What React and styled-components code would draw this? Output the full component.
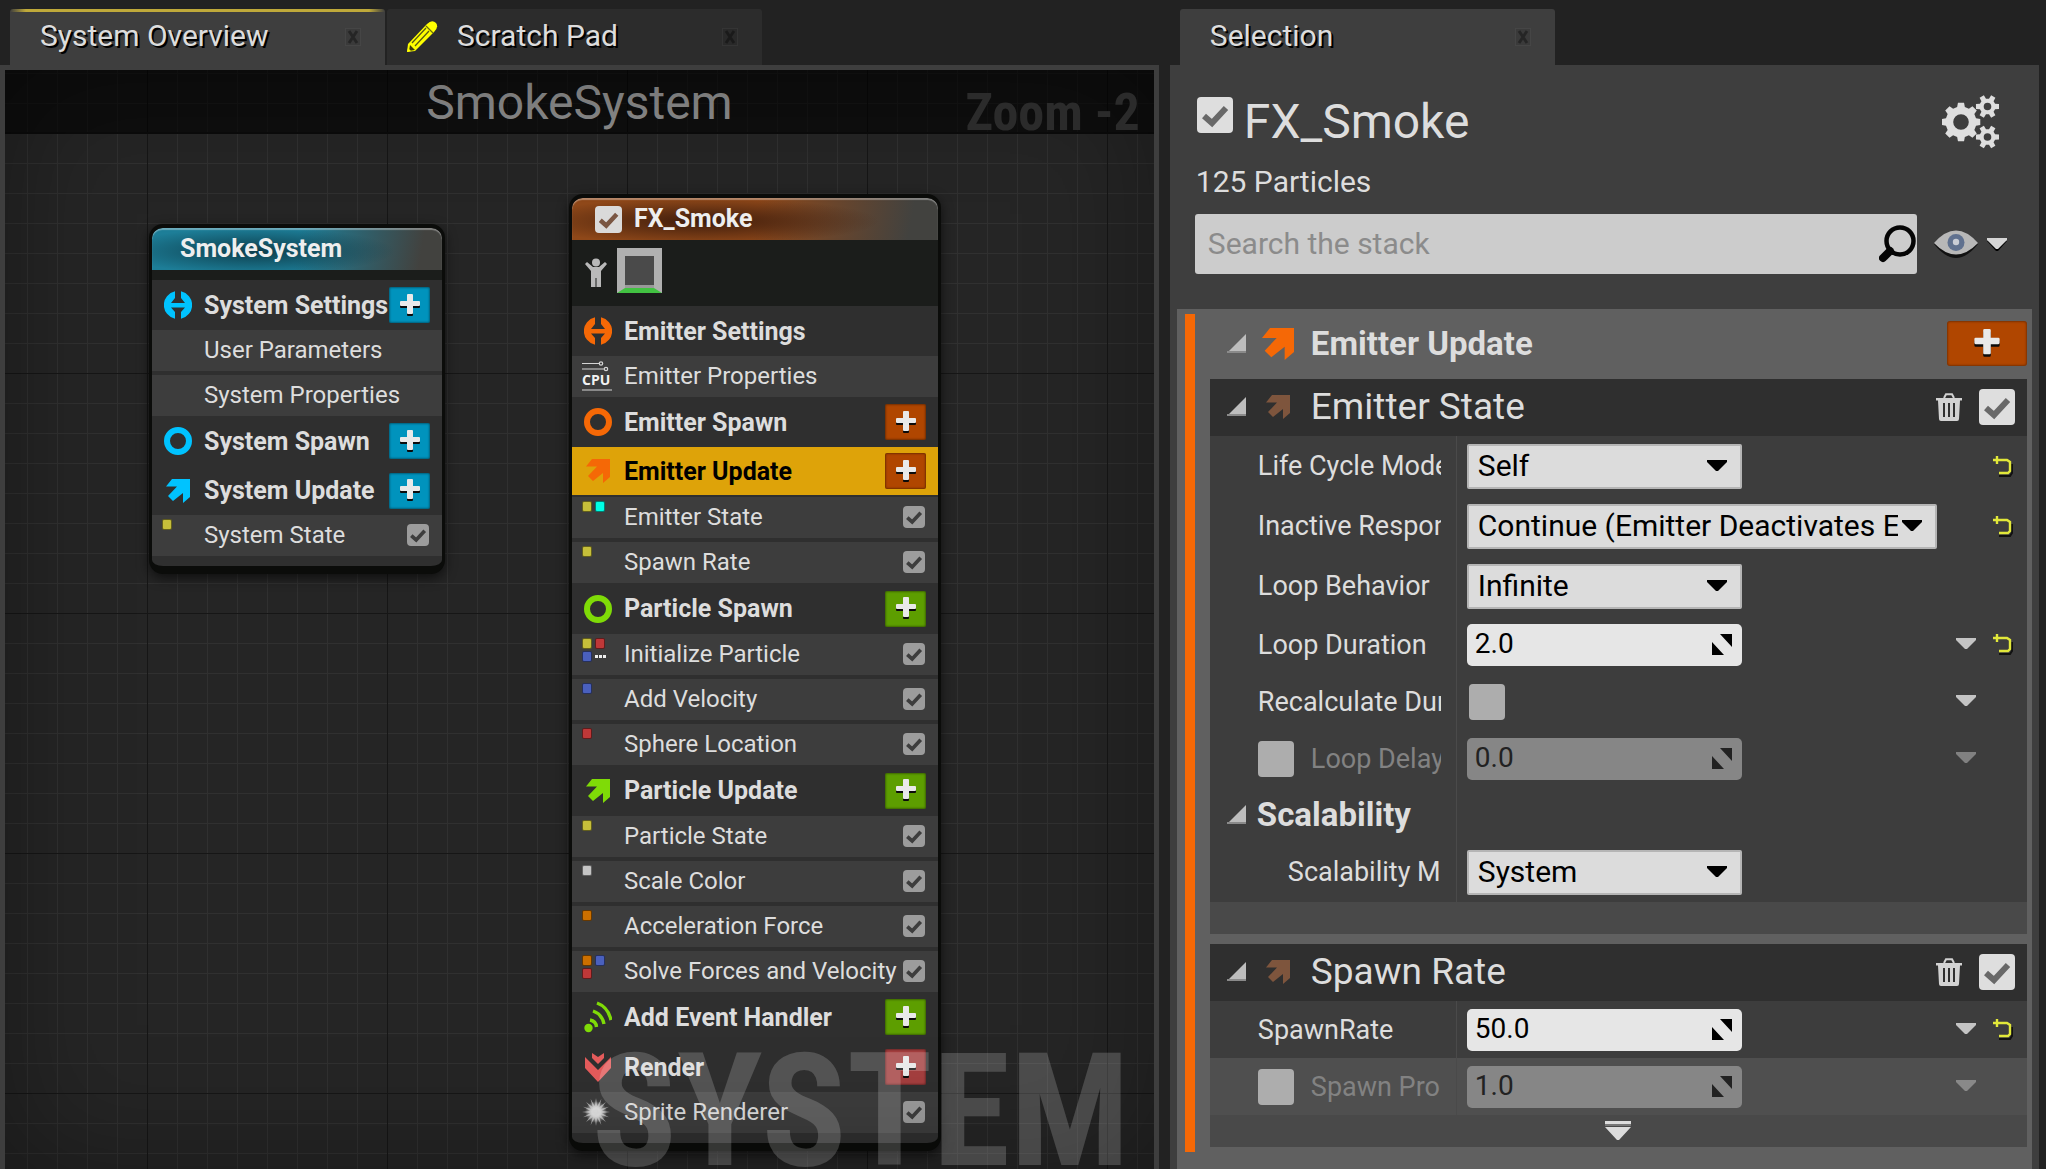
import React from "react";
import styled, { createGlobalStyle, css } from "styled-components";

const color = {
  chrome: "#222222",
  panel: "#3e3e3e",
  tabIdle: "#2c2c2c",
  group: "#606060",
  header: "#2f2f2f",
  row: "#3d3d3d",
  rowAlt: "#4f4f4f",
  footer: "#494949",
  text: "#dddddd",
  orange: "#f56806",
  orangeBtn: "#b04600",
  blue: "#00c3ff",
  blueBtn: "#0093bd",
  green: "#7fdb07",
  greenBtn: "#5d9e00",
  red: "#e65c5c",
  redBtn: "#a53f3f",
  select: "#dea309",
};

const GlobalStyle = createGlobalStyle`
  *, *::before, *::after { box-sizing: border-box; }
  html, body { margin: 0; background: ${color.chrome}; }
  body { font-family: Roboto, "Liberation Sans", sans-serif; color: ${color.text}; overflow: hidden; }
  button, input, select { font: inherit; color: inherit; margin: 0; border-radius: 0; }
  button { border: 0; padding: 0; background: none; display: grid; place-items: center; cursor: pointer; }
  h1, h2, h3, p, ul { margin: 0; padding: 0; font-weight: 400; }
  svg { display: block; flex: none; }
`;

/* ---------- window frame ---------- */

const Window = styled.div`
  height: 100vh;
  display: grid;
  grid-template-columns: 4fr 3fr;
  column-gap: 11px;
  padding: 9px 7px 0 0;
`;

const Pane = styled.section`
  min-width: 0;
  min-height: 0;
  display: flex;
  flex-direction: column;
`;

const TabStrip = styled.div`
  display: flex;
  gap: 2px;
  padding-left: 10px;
  height: 56px;
  flex: none;
`;

const TabBox = styled.div`
  width: 375px;
  display: flex;
  align-items: center;
  padding: 0 22px 0 ${(p) => (p.$icon ? 19 : 30)}px;
  border-radius: 3px 3px 0 0;
  background: ${(p) => (p.$active ? color.panel : color.tabIdle)};
  ${(p) =>
    p.$marked &&
    css`
      background: linear-gradient(90deg, transparent, #bfa93a 16px calc(100% - 16px), transparent) top / 100% 3px no-repeat,
        ${color.panel};
    `}
`;

const TabLabel = styled.button`
  flex: 1;
  display: flex;
  justify-content: flex-start;
  gap: 18px;
  font-size: 30px;
  line-height: 36px;
  white-space: nowrap;
  text-shadow: 2px 2px 0 #000;
  padding-bottom: 2px;
`;

const TabClose = styled.button`
  width: 20px;
  height: 20px;
`;

/* ---------- graph ---------- */

const GraphFrame = styled.div`
  flex: 1;
  min-height: 0;
  padding: 5px 5px 0;
  background: ${color.panel};
  display: flex;
`;

const Graph = styled.div`
  position: relative;
  flex: 1;
  overflow: hidden;
  background-color: #252525;
  background-image: linear-gradient(90deg, #161616 1px, transparent 1px), linear-gradient(#161616 1px, transparent 1px),
    linear-gradient(90deg, #303030 1px, transparent 1px), linear-gradient(#303030 1px, transparent 1px);
  background-size: 240px 240px, 240px 240px, 30px 30px, 30px 30px;
  background-position: 142px 0, 0 63px, 22px 0, 0 3px;
  &::after {
    content: "";
    position: absolute;
    inset: 0;
    pointer-events: none;
    box-shadow: inset 0 0 120px rgba(0, 0, 0, 0.35);
  }
`;

const GraphTitle = styled.h1`
  height: 64px;
  line-height: 66px;
  text-align: center;
  font-size: 48px;
  color: #8c8c8c;
  background: rgba(0, 0, 0, 0.6);
  border-bottom: 2px solid #0b0b0b;
`;

const Overlay = styled.span`
  position: absolute;
  z-index: 2;
  pointer-events: none;
  white-space: nowrap;
  font-family: "Roboto Condensed", "Liberation Sans Narrow", Roboto, sans-serif;
  font-weight: 700;
`;

const ZoomLevel = styled(Overlay)`
  top: 11px;
  right: 14px;
  font-size: 52px;
  line-height: 64px;
  color: #2b2b2b;
`;

const Watermark = styled(Overlay)`
  right: 24px;
  bottom: -36px;
  font-size: 158px;
  line-height: 188px;
  color: rgba(255, 255, 255, 0.18);
`;

const Node = styled.article`
  position: absolute;
  left: ${(p) => p.$x}px;
  top: ${(p) => p.$y}px;
  width: ${(p) => p.$w}px;
  border: solid #0b0c0a;
  border-width: 4px 3px 8px;
  border-radius: 14px;
  box-shadow: 0 4px 12px rgba(0, 0, 0, 0.6);
  background: ${color.header};
  overflow: hidden;
  padding-bottom: 10px;
`;

const NodeHeader = styled.header`
  height: 42px;
  display: flex;
  align-items: center;
  gap: 12px;
  padding: 0 0 0 ${(p) => (p.$inset)}px;
  border-radius: 10px 10px 0 0;
  box-shadow: inset 0 2px 1px rgba(255, 255, 255, 0.35);
  background: radial-gradient(ellipse 48% 55% at 36% 55%, ${(p) => p.$dark}, transparent),
    linear-gradient(100deg, ${(p) => p.$tint} 50%, #42423f 92%);
`;

const NodeTitle = styled.h2`
  font-size: 25px;
  line-height: 30px;
  font-weight: 700;
  color: #eee;
`;

const Usage = styled.div`
  height: ${(p) => p.$h}px;
  background: #1b1d1b;
  display: flex;
  align-items: flex-start;
  padding: 8px 13px 0;
  gap: 10px;
`;

const UsageIcon = styled.span`
  padding-top: 10px;
`;

const Thumb = styled.span`
  width: 45px;
  height: 45px;
  border: 8px solid #b0b0b0;
  border-width: 8px 8px 5px;
  border-bottom-color: #42c242;
  background: #4a4a4a;
  box-shadow: inset 0 -3px 0 #999;
`;

const StageRow = styled.div`
  height: ${(p) => p.$h}px;
  display: flex;
  align-items: center;
  padding: 0 12px;
  gap: 12px;
  font-size: 25px;
  font-weight: 700;
  white-space: nowrap;
  ${(p) =>
    p.$selected &&
    css`
      color: #000;
      background: ${color.select};
      border-bottom: 2px solid ${color.header};
    `}
`;

const RowIcon = styled.span`
  width: 28px;
  display: grid;
  place-items: center;
`;

const RowLabel = styled.span`
  flex: 1;
  min-width: 0;
`;

const StageAdd = styled.button`
  width: 41px;
  height: 36px;
  flex: none;
  border-radius: 2px;
  background: ${(p) => p.$fill};
  box-shadow: inset 0 0 2px 1px rgba(0, 0, 0, 0.35);
`;

const ItemList = styled.ul`
  list-style: none;
  display: grid;
  gap: 4px;
`;

const ItemRow = styled.li`
  height: 41px;
  display: flex;
  align-items: center;
  padding: 0 13px 2px 10px;
  background: ${color.row};
  font-size: 24px;
  white-space: nowrap;
`;

const ItemIcon = styled.span`
  width: 42px;
  height: 100%;
  display: grid;
  padding-top: ${(p) => (p.$top ? 4 : 0)}px;
  align-content: ${(p) => (p.$top ? "start" : "center")};
`;

const Swatches = styled.span`
  display: grid;
  grid-template-columns: 10px 10px;
  grid-auto-rows: 11px;
  gap: 2px 3px;
`;

const Swatch = styled.span`
  border-radius: 2px;
  background: ${(p) => p.$fill};
  border: 1px solid rgba(0, 0, 0, 0.5);
`;

const CpuText = styled.text`
  font: 700 14px "Open Sans", sans-serif;
`;

/* ---------- shared controls ---------- */

const TickWrap = styled.span`
  display: inline-grid;
  flex: none;
  width: ${(p) => p.$w}px;
  height: ${(p) => p.$w}px;
  place-items: center;
  color: ${(p) => p.$ink};
  > * { grid-area: 1 / 1; }
  > svg { pointer-events: none; visibility: hidden; }
  > input:checked + svg { visibility: visible; }
`;

const TickInput = styled.input`
  appearance: none;
  width: 100%;
  height: 100%;
  border-radius: 4px;
  background: ${(p) => p.$fill};
`;

const tickKinds = {
  node: { w: 22, fill: "#9c9c9c", ink: "#3d3d3d" },
  title: { w: 27, fill: "#dadada", ink: "#7a5643" },
  panel: { w: 36, fill: "#dedede", ink: "#686868" },
  empty: { w: 36, fill: "#adadad", ink: "#686868" },
};

function Tick({ kind, label, checked = true, id }) {
  const k = tickKinds[kind];
  return (
    <TickWrap $w={k.w} $ink={k.ink}>
      <TickInput id={id} type="checkbox" aria-label={label} defaultChecked={checked} $fill={k.fill} />
      <svg width={k.w} height={k.w} viewBox="0 0 36 36">
        <path d="M7 19 L15 26 L29 11" fill="none" stroke="currentColor" strokeWidth="6" />
      </svg>
    </TickWrap>
  );
}

/* ---------- details pane ---------- */

const Details = styled.div`
  flex: 1;
  min-height: 0;
  overflow: hidden;
  background: ${color.panel};
  display: flex;
  flex-direction: column;
  padding: 30px 7px 0;
`;

const EmitterHead = styled.div`
  display: flex;
  align-items: center;
  gap: 11px;
  height: 54px;
  padding: 0 33px 0 20px;
`;

const EmitterName = styled.h1`
  flex: 1;
  font-size: 48px;
  line-height: 54px;
`;

const HeadTick = styled.span`
  display: grid;
  padding-bottom: 14px;
`;

const Count = styled.p`
  padding: 15px 19px 14px;
  font-size: 30px;
  line-height: 36px;
`;

const SearchRow = styled.div`
  display: flex;
  align-items: center;
  gap: 17px;
  padding: 0 25px 35px 18px;
`;

const SearchBox = styled.label`
  flex: 1;
  height: 60px;
  display: flex;
  align-items: center;
  padding: 0 0 0 13px;
  border-radius: 3px;
  background: #cccccc;
`;

const SearchInput = styled.input`
  flex: 1;
  min-width: 0;
  border: 0;
  outline: 0;
  padding: 0 0 2px;
  background: none;
  font-size: 30px;
  color: #222;
  &::placeholder { color: #8b8b8b; opacity: 1; }
`;

const ViewButton = styled.button`
  display: flex;
  align-items: center;
  gap: 9px;
`;

const Stack = styled.div`
  flex: 1;
  background: ${color.group};
  padding: 5px 5px 0 8px;
`;

const StackGroup = styled.section`
  border-left: 10px solid ${color.orange};
  padding: 0 0 5px 15px;
  display: flex;
  flex-direction: column;
`;

const GroupHeader = styled.header`
  height: 65px;
  display: flex;
  align-items: center;
  padding: 0 0 6px 17px;
`;

const Fold = styled.button`
  width: 19px;
  height: 19px;
`;

const HeadIcon = styled.span`
  width: 65px;
  display: grid;
  place-items: center;
`;

const GroupTitle = styled.h2`
  flex: 1;
  font-size: 33px;
  line-height: 38px;
  font-weight: 700;
`;

const GroupAdd = styled.button`
  width: 80px;
  height: 45px;
  border-radius: 3px;
  background: ${color.orangeBtn};
  box-shadow: inset 0 0 2px 1px rgba(0, 0, 0, 0.3);
`;

const Module = styled.section`
  & + & { margin-top: 10px; }
`;

const ModuleHeader = styled.header`
  height: 57px;
  display: flex;
  align-items: center;
  padding: 0 12px 2px 17px;
  background: ${color.header};
`;

const ModuleTitle = styled.h3`
  flex: 1;
  font-size: 37px;
  line-height: 42px;
`;

const Trash = styled.button`
  width: 26px;
  margin-right: 17px;
`;

const Property = styled.div`
  height: ${(p) => p.$h}px;
  display: grid;
  grid-template-columns: 247px 1fr 20px 17px 20px;
  align-items: center;
  padding-right: 14px;
  background: ${(p) => (p.$alt ? color.rowAlt : color.row)};
`;

const PropLabel = styled.div`
  height: 100%;
  display: flex;
  align-items: center;
  gap: 17px;
  padding: 0 15px 0 ${(p) => p.$inset}px;
  border-right: 1px solid #4a4a4a;
  min-width: 0;
`;

const ScalabilityCell = styled(PropLabel)`
  padding: 0 15px 0 17px;
  gap: 11px;
`;

const LabelText = styled.label`
  flex: 1;
  min-width: 0;
  overflow: hidden;
  white-space: nowrap;
  font-size: 27px;
  line-height: 34px;
  color: ${(p) => (p.$dim ? "#828282" : color.text)};
`;

const SectionText = styled.h3`
  font-size: 33px;
  line-height: 38px;
  font-weight: 700;
`;

const PropValue = styled.div`
  padding-left: ${(p) => (p.$check ? 12 : 10)}px;
  display: flex;
  align-items: center;
`;

const FieldWrap = styled.span`
  display: inline-grid;
  width: ${(p) => (p.$wide ? 470 : 275)}px;
  align-items: center;
  justify-items: end;
  > * { grid-area: 1 / 1; }
  > svg { pointer-events: none; margin-right: ${(p) => (p.$number ? 9 : 15)}px; }
`;

const Select = styled.select`
  appearance: none;
  width: 100%;
  height: 45px;
  padding: 0 37px 0 9px;
  border: 2px solid #b5b5b5;
  border-radius: 2px;
  background: #dcdcdc;
  color: #000;
  font-size: 30px;
  line-height: 36px;
`;

const NumberField = styled.input`
  width: 100%;
  height: 42px;
  padding: 0 40px 2px 8px;
  border: 0;
  border-radius: 5px;
  background: ${(p) => (p.$dim ? "#868686" : "#e6e6e6")};
  color: ${(p) => (p.$dim ? "#222" : "#000")};
  font-size: 28px;
`;

const CellButton = styled.button`
  grid-column: 3;
  width: 20px;
  height: 24px;
  opacity: ${(p) => (p.$dim ? 0.5 : 1)};
`;

const ResetButton = styled(CellButton)`
  grid-column: 5;
`;

const Footer = styled.div`
  height: ${(p) => p.$h}px;
  display: grid;
  place-items: center;
  background: ${color.footer};
`;

/* ---------- icons ---------- */

const CloseIcon = () => (
  <svg width="16" height="18" viewBox="0 0 16 18">
    <rect x="0.5" y="0.5" width="15" height="17" fill="#000" fillOpacity="0.06" stroke="#fff" strokeOpacity="0.05" />
    <path d="M4 3 L12 15 M12 3 L4 15" stroke="#000" strokeOpacity="0.35" strokeWidth="3" />
  </svg>
);

const PencilIcon = () => (
  <svg width="33" height="33" viewBox="0 0 33 33">
    <path d="M1 32 L2 24 L21 4 Q26 -1 30 3 Q33 7 28 12 L9 31 Z" fill="#ffff00" />
    <path d="M6 23 L20 8 M9 26 L23 11" stroke="#5a5a14" strokeWidth="1.3" fill="none" />
    <path d="M20 6 L27 13" stroke="#6a6a10" strokeWidth="1.2" fill="none" />
    <path d="M3 31 L4 25 L9 30 Z" fill="#3c3c10" />
    <path d="M1 32 L2 28 L5 31 Z" fill="#ffff00" />
  </svg>
);

const PlusIcon = ({ w = 20 }) => (
  <svg width={w} height={w + 3} viewBox="0 0 20 23">
    <path d="M8 2 h4 q1 0 1 1 v6 h6 q1 0 1 1 v3 q0 1 -1 1 h-6 v7 q0 1 -1 1 h-4 q-1 0 -1 -1 v-7 h-6 q-1 0 -1 -1 v-3 q0 -1 1 -1 h6 v-6 q0 -1 1 -1 z" fill="#0b0b0b" />
    <path d="M8 0 h4 q1 0 1 1 v6 h6 q1 0 1 1 v3 q0 1 -1 1 h-6 v7 q0 1 -1 1 h-4 q-1 0 -1 -1 v-7 h-6 q-1 0 -1 -1 v-3 q0 -1 1 -1 h6 v-6 q0 -1 1 -1 z" fill="#e9e9e9" />
  </svg>
);

const SettingsIcon = ({ c }) => (
  <svg width="28" height="28" viewBox="0 0 28 28">
    <path
      fill={c}
      d="M11 0.3 V7 L7 12 H21 L17 7 V0.3 A14 14 0 0 1 17 27.7 V21 L21 16.5 H7 L11 21 V27.7 A14 14 0 0 1 11 0.3 Z"
    />
  </svg>
);

const SpawnIcon = ({ c }) => (
  <svg width="28" height="28" viewBox="0 0 28 28">
    <circle cx="14" cy="14" r="11" fill="none" stroke={c} strokeWidth="6" />
  </svg>
);

const UpdateIcon = ({ c, w = 24 }) => (
  <svg width={w} height={w} viewBox="0 0 24 24">
    <path fill={c} d="M6 0 H24 V18 L17 24 V14 L7 22 L2 17 L11 7.5 H0 Z" />
  </svg>
);

const EventIcon = ({ c }) => (
  <svg width="28" height="32" viewBox="0 0 28 32">
    <circle cx="4.5" cy="27" r="4.2" fill={c} />
    <path
      d="M6 19 Q12 20 12.5 26 M9 10 Q18 13 20 23 M13 2 Q24 6 27 19"
      fill="none"
      stroke={c}
      strokeWidth="3.4"
    />
  </svg>
);

const RenderIcon = ({ c }) => (
  <svg width="26" height="29" viewBox="0 0 26 29">
    <path fill={c} d="M0 4 L13 17 L26 4 V15 L13 29 L0 15 Z" />
    <path fill={c} d="M7 0 L13 4 L19 0 V5 L13 11 L7 5 Z" />
  </svg>
);

const SpriteIcon = () => (
  <svg width="28" height="30" viewBox="-14 -15 28 30">
    <defs>
      <radialGradient id="glow">
        <stop offset="0.3" stopColor="#f4f4f4" />
        <stop offset="1" stopColor="#f4f4f4" stopOpacity="0" />
      </radialGradient>
    </defs>
    <circle r="11" fill="url(#glow)" />
    {Array.from({ length: 16 }, (_, i) => (
      <path key={i} d="M-2 0 L0 -14 L2 0 Z" fill="#e2e2e2" opacity="0.65" transform={`rotate(${i * 22.5})`} />
    ))}
  </svg>
);

const CpuIcon = () => (
  <svg width="30" height="30" viewBox="0 0 30 30">
    <g fill="none" stroke="#d5d5d5" strokeWidth="1.2">
      <path d="M0 2.5 H17 M0 8 H22 M0 29 H30" />
      <circle cx="19" cy="2.5" r="1.7" />
      <circle cx="24" cy="8" r="1.7" />
    </g>
    <CpuText x="0" y="24" fill="#f2f2f2">CPU</CpuText>
  </svg>
);

const PersonIcon = () => (
  <svg width="22" height="30" viewBox="0 0 22 30">
    <circle cx="11" cy="4.5" r="4" fill="#b9b9b9" />
    <path fill="#b9b9b9" d="M0 6 L2 4 L8 9 H14 L20 4 L22 6 L16 13 V29 H11.5 V20 H10.5 V29 H6 V13 Z" />
  </svg>
);

const FoldIcon = () => (
  <svg width="19" height="19" viewBox="0 0 19 19">
    <path d="M19 0 V19 H0 Z" fill="#bdbdbd" />
    <path d="M0 18 H19" stroke="#8a8a8a" strokeWidth="2" />
  </svg>
);

const CaretIcon = ({ c = "#c4c4c4", edge }) => (
  <svg width="20" height="15" viewBox="0 0 20 15">
    {edge && <path d="M0 4 H20 L11 14 H9 Z" fill={edge} />}
    <path d="M0 1 H20 V3 L11 12 H9 L0 3 Z" fill={c} />
  </svg>
);

const MoreIcon = () => (
  <svg width="26" height="20" viewBox="0 0 26 20">
    <path d="M0 0 H26 V3 H0 Z M0 6 H26 L14 19 H12 Z" fill="#dcdcdc" />
    <path d="M0 4 H26" stroke="#777" strokeWidth="2" />
  </svg>
);

const SpinIcon = ({ c }) => (
  <svg width="22" height="22" viewBox="0 0 22 22">
    <path d="M9 0 H21 V13 Z M1 8 L13 21 H1 Z" fill={c} />
  </svg>
);

const ResetIcon = () => (
  <svg width="20" height="21" viewBox="0 0 20 21">
    <path d="M6 20 H17 L19 17 V8" fill="none" stroke="#111" strokeWidth="2" />
    <path d="M0 4 H14 L17 6 V15 L15 17 H6 M4 0 V8" fill="none" stroke="#e2e83a" strokeWidth="2.4" />
  </svg>
);

const TrashIcon = () => (
  <svg width="26" height="28" viewBox="0 0 26 28">
    <path d="M8 5 L10 1.2 H16 L18 5" fill="none" stroke="#d2d2d2" strokeWidth="2" />
    <path d="M0 5 H26 V7.5 H24 L23 26 Q23 28 21 28 H5 Q3 28 3 26 L2 7.5 H0 Z" fill="#d2d2d2" />
    <path d="M8 10 V24 M13 10 V24 M18 10 V24" stroke={color.header} strokeWidth="2" />
  </svg>
);

const SearchIcon = () => (
  <svg width="38" height="38" viewBox="0 0 38 38">
    <circle cx="21" cy="16" r="13.5" fill="none" stroke="#050505" strokeWidth="4.5" />
    <path d="M11 26 L4 33" stroke="#050505" strokeWidth="8" strokeLinecap="round" />
  </svg>
);

const EyeIcon = () => (
  <svg width="44" height="28" viewBox="0 0 44 28">
    <path d="M0 14 Q22 -10 44 14 Q22 42 0 14 Z" fill="#111" />
    <path d="M0 13 Q22 -12 44 13 Q22 36 0 13 Z" fill="#b8b8b8" />
    <circle cx="22" cy="12.5" r="8.5" fill="#60718f" />
    <circle cx="22" cy="12" r="3.2" fill="#c9cdd6" />
  </svg>
);

function gearPath(cx, cy, outer, inner, teeth) {
  const step = (Math.PI * 2) / teeth;
  const at = (r, a) => `${(cx + r * Math.cos(a)).toFixed(2)} ${(cy + r * Math.sin(a)).toFixed(2)}`;
  const points = [];
  for (let i = 0; i < teeth; i += 1) {
    const a = i * step;
    points.push(at(inner, a - step * 0.32), at(outer, a - step * 0.2), at(outer, a + step * 0.2), at(inner, a + step * 0.32));
  }
  return `M${points.join(" L")} Z`;
}

const ring = (cx, cy, r) => `M${cx - r} ${cy} a${r} ${r} 0 1 0 ${r * 2} 0 a${r} ${r} 0 1 0 ${-r * 2} 0 Z`;

const Gear = ({ cx, cy, outer, inner, hole, teeth }) => (
  <path fillRule="evenodd" fill="#dedede" d={`${gearPath(cx, cy, outer, inner, teeth)} ${ring(cx, cy, hole)}`} />
);

const GearsIcon = () => (
  <svg width="57" height="54" viewBox="0 0 57 54">
    <Gear cx={19} cy={27} outer={19.5} inner={15.5} hole={7.8} teeth={8} />
    <Gear cx={45.5} cy={11.5} outer={11.8} inner={8} hole={3.8} teeth={6} />
    <Gear cx={45.5} cy={42} outer={11.8} inner={8} hole={3.8} teeth={6} />
  </svg>
);

const stageIcons = {
  settings: SettingsIcon,
  spawn: SpawnIcon,
  update: UpdateIcon,
  event: EventIcon,
  render: RenderIcon,
};

/* ---------- data ---------- */

const Y = "#c6bf3a";
const R = "#bf3838";
const B = "#4a60bd";
const O = "#cc7000";

const systemStages = [
  { name: "System Settings", icon: "settings", ink: color.blue, add: color.blueBtn, items: [{ name: "User Parameters" }, { name: "System Properties" }] },
  { name: "System Spawn", icon: "spawn", ink: color.blue, add: color.blueBtn },
  { name: "System Update", icon: "update", ink: color.blue, add: color.blueBtn, height: 49, items: [{ name: "System State", tick: true, marks: [Y] }] },
];

const emitterStages = [
  { name: "Emitter Settings", icon: "settings", ink: color.orange, items: [{ name: "Emitter Properties", glyph: "cpu" }] },
  { name: "Emitter Spawn", icon: "spawn", ink: color.orange, add: color.orangeBtn },
  {
    name: "Emitter Update",
    icon: "update",
    ink: color.orange,
    add: color.orangeBtn,
    selected: true,
    items: [
      { name: "Emitter State", tick: true, marks: [Y, "#00ffe6"] },
      { name: "Spawn Rate", tick: true, marks: [Y] },
    ],
  },
  {
    name: "Particle Spawn",
    icon: "spawn",
    ink: color.green,
    add: color.greenBtn,
    height: 51,
    items: [
      { name: "Initialize Particle", tick: true, marks: [Y, R, B], more: true },
      { name: "Add Velocity", tick: true, marks: [B] },
      { name: "Sphere Location", tick: true, marks: [R] },
    ],
  },
  {
    name: "Particle Update",
    icon: "update",
    ink: color.green,
    add: color.greenBtn,
    height: 51,
    items: [
      { name: "Particle State", tick: true, marks: [Y] },
      { name: "Scale Color", tick: true, marks: ["#c4c4c4"] },
      { name: "Acceleration Force", tick: true, marks: [O] },
      { name: "Solve Forces and Velocity", tick: true, marks: [O, B, R] },
    ],
  },
  { name: "Add Event Handler", icon: "event", ink: color.green, add: color.greenBtn },
  { name: "Render", icon: "render", ink: color.red, add: color.redBtn, items: [{ name: "Sprite Renderer", tick: true, glyph: "sprite" }] },
];

/* ---------- parts ---------- */

function Tab({ title, icon, active, marked }) {
  return (
    <TabBox $active={active} $marked={marked} $icon={!!icon}>
      <TabLabel type="button">
        {icon}
        {title}
      </TabLabel>
      <TabClose type="button" aria-label={`Close ${title}`}>
        <CloseIcon />
      </TabClose>
    </TabBox>
  );
}

function Item({ item }) {
  return (
    <ItemRow>
      <ItemIcon $top={!!item.marks}>
        {item.glyph === "cpu" && <CpuIcon />}
        {item.glyph === "sprite" && <SpriteIcon />}
        {item.marks && (
          <Swatches>
            {item.marks.map((m, i) => (
              <Swatch key={i} $fill={m} />
            ))}
            {item.more && (
              <svg width="11" height="11" viewBox="0 0 11 11">
                <path d="M0 4 h3 v3 h-3 z M4 4 h3 v3 h-3 z M8 4 h3 v3 h-3 z" fill="#eee" />
              </svg>
            )}
          </Swatches>
        )}
      </ItemIcon>
      <RowLabel>{item.name}</RowLabel>
      {item.tick && <Tick kind="node" label={`Enable ${item.name}`} />}
    </ItemRow>
  );
}

function Stage({ stage }) {
  const Icon = stageIcons[stage.icon];
  return (
    <>
      <StageRow $h={stage.height || 50} $selected={stage.selected}>
        <RowIcon>
          <Icon c={stage.ink} />
        </RowIcon>
        <RowLabel>{stage.name}</RowLabel>
        {stage.add && (
          <StageAdd type="button" $fill={stage.add} aria-label={`Add to ${stage.name}`}>
            <PlusIcon />
          </StageAdd>
        )}
      </StageRow>
      {stage.items && (
        <ItemList>
          {stage.items.map((item) => (
            <Item key={item.name} item={item} />
          ))}
        </ItemList>
      )}
    </>
  );
}

function Prop({ id, label, h = 57, inset = 48, alt, dim, toggle, check, menu, reset, children }) {
  return (
    <Property $h={h} $alt={alt}>
      <PropLabel $inset={inset}>
        {toggle && <Tick kind="empty" label={`Edit ${label}`} checked={false} />}
        <LabelText htmlFor={id} $dim={dim}>
          {label}
        </LabelText>
      </PropLabel>
      <PropValue $check={check}>{children}</PropValue>
      {menu && (
        <CellButton type="button" aria-label={`${label} options`} $dim={dim}>
          <CaretIcon />
        </CellButton>
      )}
      {reset && (
        <ResetButton type="button" aria-label={`Reset ${label}`}>
          <ResetIcon />
        </ResetButton>
      )}
    </Property>
  );
}

function Choice({ id, value, wide }) {
  return (
    <FieldWrap $wide={wide}>
      <Select id={id} defaultValue={value}>
        <option>{value}</option>
      </Select>
      <CaretIcon c="#000" />
    </FieldWrap>
  );
}

function NumberBox({ id, value, dim }) {
  return (
    <FieldWrap $number>
      <NumberField id={id} type="text" inputMode="decimal" defaultValue={value} $dim={dim} />
      <SpinIcon c={dim ? "#222" : "#000"} />
    </FieldWrap>
  );
}

function ModuleHead({ title }) {
  return (
    <ModuleHeader>
      <Fold type="button" aria-label={`Collapse ${title}`}>
        <FoldIcon />
      </Fold>
      <HeadIcon>
        <UpdateIcon c="#7e553d" />
      </HeadIcon>
      <ModuleTitle>{title}</ModuleTitle>
      <Trash type="button" aria-label={`Delete ${title}`}>
        <TrashIcon />
      </Trash>
      <Tick kind="panel" label={`Enable ${title}`} />
    </ModuleHeader>
  );
}

export default function App() {
  return (
    <>
      <GlobalStyle />
      <Window>
        <Pane>
          <TabStrip>
            <Tab title="System Overview" active marked />
            <Tab title="Scratch Pad" icon={<PencilIcon />} />
          </TabStrip>
          <GraphFrame>
            <Graph>
              <GraphTitle>SmokeSystem</GraphTitle>
              <ZoomLevel>Zoom -2</ZoomLevel>
              <Node $x={144} $y={154} $w={296}>
                <NodeHeader $inset={28} $tint="#1d7e98" $dark="#0d3d4b">
                  <NodeTitle>SmokeSystem</NodeTitle>
                </NodeHeader>
                <Usage $h={10} />
                {systemStages.map((s) => (
                  <Stage key={s.name} stage={s} />
                ))}
              </Node>
              <Node $x={564} $y={124} $w={372}>
                <NodeHeader $inset={23} $tint="#8f4819" $dark="#3d1c0c">
                  <Tick kind="title" label="Enable FX_Smoke" />
                  <NodeTitle>FX_Smoke</NodeTitle>
                </NodeHeader>
                <Usage $h={66}>
                  <UsageIcon>
                    <PersonIcon />
                  </UsageIcon>
                  <Thumb />
                </Usage>
                {emitterStages.map((s) => (
                  <Stage key={s.name} stage={s} />
                ))}
              </Node>
              <Watermark>SYSTEM</Watermark>
            </Graph>
          </GraphFrame>
        </Pane>

        <Pane>
          <TabStrip>
            <Tab title="Selection" active />
          </TabStrip>
          <Details>
            <EmitterHead>
              <HeadTick>
                <Tick kind="panel" label="Enable emitter" />
              </HeadTick>
              <EmitterName>FX_Smoke</EmitterName>
              <button type="button" aria-label="Emitter options">
                <GearsIcon />
              </button>
            </EmitterHead>
            <Count>125 Particles</Count>
            <SearchRow>
              <SearchBox>
                <SearchInput type="text" placeholder="Search the stack" aria-label="Search the stack" />
                <SearchIcon />
              </SearchBox>
              <ViewButton type="button" aria-label="View options">
                <EyeIcon />
                <CaretIcon c="#d5d5d5" edge="#000" />
              </ViewButton>
            </SearchRow>
            <Stack>
              <StackGroup>
                <GroupHeader>
                  <Fold type="button" aria-label="Collapse Emitter Update">
                    <FoldIcon />
                  </Fold>
                  <HeadIcon>
                    <UpdateIcon c={color.orange} w={32} />
                  </HeadIcon>
                  <GroupTitle>Emitter Update</GroupTitle>
                  <GroupAdd type="button" aria-label="Add to Emitter Update">
                    <PlusIcon w={26} />
                  </GroupAdd>
                </GroupHeader>

                <Module>
                  <ModuleHead title="Emitter State" />
                  <Prop id="life" label="Life Cycle Mode" h={60} reset>
                    <Choice id="life" value="Self" />
                  </Prop>
                  <Prop id="inactive" label="Inactive Response" h={60} reset>
                    <Choice id="inactive" value="Continue (Emitter Deactivates Emitter Then Completes)" wide />
                  </Prop>
                  <Prop id="behavior" label="Loop Behavior" h={60}>
                    <Choice id="behavior" value="Infinite" />
                  </Prop>
                  <Prop id="duration" label="Loop Duration" menu reset>
                    <NumberBox id="duration" value="2.0" />
                  </Prop>
                  <Prop id="recalc" label="Recalculate Duration" check menu>
                    <Tick id="recalc" kind="empty" label="Recalculate Duration" checked={false} />
                  </Prop>
                  <Prop id="delay" label="Loop Delay" toggle dim menu>
                    <NumberBox id="delay" value="0.0" dim />
                  </Prop>
                  <Property $h={55}>
                    <ScalabilityCell>
                      <Fold type="button" aria-label="Collapse Scalability">
                        <FoldIcon />
                      </Fold>
                      <SectionText>Scalability</SectionText>
                    </ScalabilityCell>
                  </Property>
                  <Prop id="scalability" label="Scalability Mode" h={60} inset={78}>
                    <Choice id="scalability" value="System" />
                  </Prop>
                  <Footer $h={32} />
                </Module>

                <Module>
                  <ModuleHead title="Spawn Rate" />
                  <Prop id="rate" label="SpawnRate" menu reset>
                    <NumberBox id="rate" value="50.0" />
                  </Prop>
                  <Prop id="probability" label="Spawn Probability" alt toggle dim menu>
                    <NumberBox id="probability" value="1.0" dim />
                  </Prop>
                  <Footer $h={32}>
                    <button type="button" aria-label="Show advanced">
                      <MoreIcon />
                    </button>
                  </Footer>
                </Module>
              </StackGroup>
            </Stack>
          </Details>
        </Pane>
      </Window>
    </>
  );
}
